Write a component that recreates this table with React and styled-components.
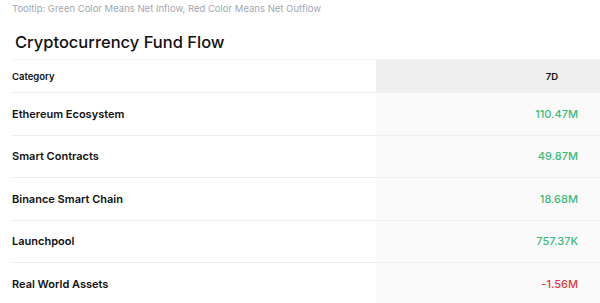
import { Fragment } from "react";
import styled, { createGlobalStyle } from "styled-components";

const GlobalStyle = createGlobalStyle`
  body {
    margin: 0;
    background: #fff;
    font-family: Inter, "Noto Sans", sans-serif;
  }
`;

const Page = styled.div`
  width: 600px;
  height: 303px;
  overflow: hidden;
  padding-left: 12px;
  box-sizing: border-box;
`;

const Tooltip = styled.div`
  font-size: 9.5px;
  color: #a3a7b0;
  line-height: 12px;
  padding-top: 3px;
`;

const Title = styled.h1`
  margin: 17px 0 0 3px;
  font-size: 16.5px;
  font-weight: 500;
  color: #111;
  line-height: 20px;
`;

const Table = styled.div`
  margin-top: 7px;
  display: grid;
  grid-template-columns: 364px 1fr;
  border-top: 1px solid #f3f3f3;
`;

const Cell = styled.div`
  display: flex;
  align-items: center;
  height: ${(p) => (p.$head ? "32px" : "41.5px")};
  border-bottom: 1px solid #ececec;
  font-size: ${(p) => (p.$head ? "9.5px" : "11px")};
  font-weight: 600;
  color: #111;
`;

const NameCell = styled(Cell)``;

const ValueCell = styled(Cell)`
  justify-content: flex-end;
  padding-right: ${(p) => (p.$head ? "42px" : "22px")};
  background: ${(p) => (p.$head ? "#efefef" : "#fafafa")};
  border-bottom-color: ${(p) => (p.$head ? "#efefef" : "#eeeeee")};
  font-weight: ${(p) => (p.$head ? 600 : 500)};
  font-size: ${(p) => (p.$head ? "9.5px" : "11px")};
  color: ${(p) => (p.$head ? "#111" : p.$negative ? "#dc3a3a" : "#3dba7b")};
`;

const rows = [
  { name: "Ethereum Ecosystem", value: "110.47M" },
  { name: "Smart Contracts", value: "49.87M" },
  { name: "Binance Smart Chain", value: "18.68M" },
  { name: "Launchpool", value: "757.37K" },
  { name: "Real World Assets", value: "-1.56M" },
];

export default function App() {
  return (
    <Page>
      <GlobalStyle />
      <Tooltip>Tooltip: Green Color Means Net Inflow, Red Color Means Net Outflow</Tooltip>
      <Title>Cryptocurrency Fund Flow</Title>
      <Table>
        <NameCell $head>Category</NameCell>
        <ValueCell $head>7D</ValueCell>
        {rows.map((r) => (
          <Fragment key={r.name}>
            <NameCell>{r.name}</NameCell>
            <ValueCell $negative={r.value.startsWith("-")}>{r.value}</ValueCell>
          </Fragment>
        ))}
      </Table>
    </Page>
  );
}
